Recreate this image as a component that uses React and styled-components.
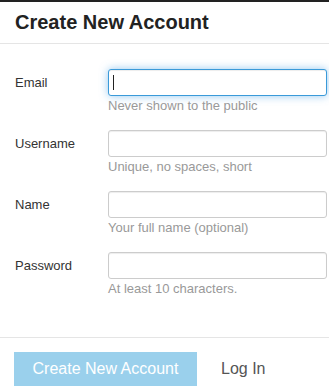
import styled, { createGlobalStyle } from 'styled-components';

const GlobalStyle = createGlobalStyle`
    body {
        margin: 0;
        background: #fff;
        font-family: "Liberation Sans", Arial, sans-serif;
        color: #333;
    }
`

const fields = [
    { label: 'Email', help: 'Never shown to the public', type: 'email', focused: true },
    { label: 'Username', help: 'Unique, no spaces, short', type: 'text' },
    { label: 'Name', help: 'Your full name (optional)', type: 'text' },
    { label: 'Password', help: 'At least 10 characters.', type: 'password' },
]

const App = () => {
    return (
        <>
            <GlobalStyle />
            <Modal>
                <Header>
                    <Title>Create New Account</Title>
                </Header>
                <Body>
                    {fields.map((f) => (
                        <Group key={f.label}>
                            <Label>{f.label}</Label>
                            <Control>
                                <Input type={f.type} $focused={f.focused} autoFocus={f.focused} />
                                {f.focused && <Caret />}
                                <Help>{f.help}</Help>
                            </Control>
                        </Group>
                    ))}
                </Body>
                <Footer>
                    <PrimaryButton disabled>Create New Account</PrimaryButton>
                    <LinkButton>Log In</LinkButton>
                </Footer>
            </Modal>
        </>
    )
}

const Modal = styled.div`
    border-top: 2px solid #222;
    height: 384px;
    overflow: hidden;
`
const Header = styled.div`
    padding: 9px 15px 9px;
    border-bottom: 1px solid #e5e5e5;
`
const Title = styled.h4`
    margin: 0;
    font-size: 20px;
    font-weight: bold;
    line-height: 23px;
    color: #222;
`
const Body = styled.div`
    padding: 25px 0 39px 15px;
    display: flex;
    flex-direction: column;
    gap: 15px;
`
const Group = styled.div`
    display: grid;
    grid-template-columns: 93px 1fr;
    align-items: start;
`
const Label = styled.label`
    font-size: 13px;
    line-height: 18px;
    padding-top: 5px;
    color: #333;
`
const Control = styled.div`
    position: relative;
    display: flex;
    flex-direction: column;
    padding-right: 2px;
`
const Input = styled.input`
    box-sizing: border-box;
    height: 27px;
    width: 100%;
    margin: 0;
    padding: 4px 6px;
    font-size: 13px;
    font-family: inherit;
    border: 1px solid ${(p) => (p.$focused ? '#3a9ad9' : '#ccc')};
    border-radius: 3px;
    background: #fff;
    caret-color: transparent;
    box-shadow: ${(p) =>
        p.$focused
            ? 'inset 0 1px 1px rgba(0,0,0,.075), 0 0 8px rgba(102,175,233,.7)'
            : 'inset 0 1px 1px rgba(0,0,0,.075)'};
    outline: none;
`
const Caret = styled.span`
    position: absolute;
    left: 5px;
    top: 6px;
    width: 1px;
    height: 15px;
    background: #222;
`
const Help = styled.span`
    margin-top: 1px;
    font-size: 13px;
    line-height: 18px;
    color: #999;
`
const Footer = styled.div`
    border-top: 1px solid #e5e5e5;
    padding: 14px 14px;
    display: flex;
    align-items: center;
    gap: 24px;
`
const PrimaryButton = styled.button`
    width: 183px;
    height: 34px;
    border: none;
    background: #9ad0ec;
    color: #fff;
    font-family: inherit;
    font-size: 16px;
    padding: 0;
    cursor: not-allowed;
`
const LinkButton = styled.a`
    font-size: 16px;
    color: #555;
    cursor: pointer;
`

export default App
